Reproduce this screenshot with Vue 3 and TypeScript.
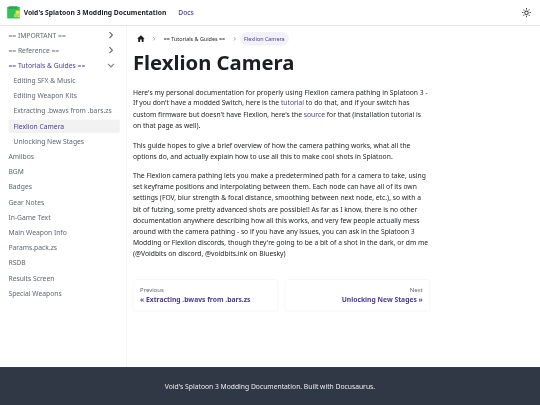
<script setup lang="ts">
interface NavItem {
  label: string
  arrow?: 'right' | 'down'
  active?: boolean
  sub?: boolean
  current?: boolean
}

const items: NavItem[] = [
  { label: '== IMPORTANT ==', arrow: 'right' },
  { label: '== Reference ==', arrow: 'right' },
  { label: '== Tutorials & Guides ==', arrow: 'down', active: true },
  { label: 'Editing SFX & Music', sub: true },
  { label: 'Editing Weapon Kits', sub: true },
  { label: 'Extracting .bwavs from .bars.zs', sub: true },
  { label: 'Flexlion Camera', sub: true, current: true },
  { label: 'Unlocking New Stages', sub: true },
  { label: 'Amiibos' },
  { label: 'BGM' },
  { label: 'Badges' },
  { label: 'Gear Notes' },
  { label: 'In-Game Text' },
  { label: 'Main Weapon Info' },
  { label: 'Params.pack.zs' },
  { label: 'RSDB' },
  { label: 'Results Screen' },
  { label: 'Special Weapons' },
]
</script>

<template>
  <div class="viewport">
    <div class="page">
      <header class="navbar">
        <svg class="logo" viewBox="0 0 32 32">
          <rect x="1" y="2" width="30" height="28" rx="2" fill="#35c05a" />
          <rect x="5" y="1" width="20" height="6" fill="#2aa54a" />
          <rect x="21" y="11" width="10" height="10" fill="#e6e552" />
          <rect x="17" y="19" width="9" height="8" fill="#a9d958" />
          <rect x="26" y="22" width="5" height="5" fill="#d8e37a" />
        </svg>
        <span class="brand">Void's Splatoon 3 Modding Documentation</span>
        <a class="nav-link">Docs</a>
        <button class="theme" aria-label="Theme">
          <svg viewBox="0 0 24 24" width="24" height="24">
            <path fill="currentColor" d="M12,9c1.65,0,3,1.35,3,3s-1.35,3-3,3s-3-1.35-3-3S10.35,9,12,9 M12,7c-2.76,0-5,2.24-5,5s2.24,5,5,5s5-2.24,5-5 S14.76,7,12,7L12,7z M2,13l2,0c0.55,0,1-0.45,1-1s-0.45-1-1-1l-2,0c-0.55,0-1,0.45-1,1S1.45,13,2,13z M20,13l2,0c0.55,0,1-0.45,1-1 s-0.45-1-1-1l-2,0c-0.55,0-1,0.45-1,1S19.45,13,20,13z M11,2v2c0,0.55,0.45,1,1,1s1-0.45,1-1V2c0-0.55-0.45-1-1-1S11,1.45,11,2z M11,20v2c0,0.55,0.45,1,1,1s1-0.45,1-1v-2c0-0.55-0.45-1-1-1C11.45,19,11,19.45,11,20z M5.99,4.58c-0.39-0.39-1.03-0.39-1.41,0 c-0.39,0.39-0.39,1.03,0,1.41l1.06,1.06c0.39,0.39,1.03,0.39,1.41,0s0.39-1.03,0-1.41L5.99,4.58z M18.36,16.95 c-0.39-0.39-1.03-0.39-1.41,0c-0.39,0.39-0.39,1.03,0,1.41l1.06,1.06c0.39,0.39,1.03,0.39,1.41,0c0.39-0.39,0.39-1.03,0-1.41 L18.36,16.95z M19.42,5.99c0.39-0.39,0.39-1.03,0-1.41c-0.39-0.39-1.03-0.39-1.41,0l-1.06,1.06c-0.39,0.39-0.39,1.03,0,1.41 s1.03,0.39,1.41,0L19.42,5.99z M7.05,18.36c0.39-0.39,0.39-1.03,0-1.41c-0.39-0.39-1.03-0.39-1.41,0l-1.06,1.06 c-0.39,0.39-0.39,1.03,0,1.41s1.03,0.39,1.41,0L7.05,18.36z" />
          </svg>
        </button>
      </header>

      <div class="main">
        <aside class="sidebar">
          <ul class="menu">
            <li
              v-for="item in items"
              :key="item.label"
              class="menu-item"
              :class="{ sub: item.sub, active: item.active, current: item.current }"
            >
              <span>{{ item.label }}</span>
              <svg v-if="item.arrow" class="arrow" :class="item.arrow" viewBox="0 0 24 24" width="32" height="32">
                <path fill="currentColor" d="M7.41 15.41L12 10.83l4.59 4.58L18 14l-6-6-6 6z" />
              </svg>
            </li>
          </ul>
        </aside>

        <main class="content">
          <nav class="crumbs">
            <svg class="home" viewBox="0 0 24 24" width="22" height="22">
              <path fill="currentColor" d="M10 19v-5h4v5c0 .55.45 1 1 1h3c.55 0 1-.45 1-1v-7h1.7c.46 0 .68-.57.33-.87L12.67 3.6c-.38-.34-.96-.34-1.34 0l-8.36 7.53c-.34.3-.13.87.33.87H5v7c0 .55.45 1 1 1h3c.55 0 1-.45 1-1z" />
            </svg>
            <svg class="sep" viewBox="0 0 8 12" width="8" height="12">
              <path d="M2 2l4 4-4 4" fill="none" stroke="currentColor" stroke-width="1.4" />
            </svg>
            <span class="crumb">== Tutorials &amp; Guides ==</span>
            <svg class="sep" viewBox="0 0 8 12" width="8" height="12">
              <path d="M2 2l4 4-4 4" fill="none" stroke="currentColor" stroke-width="1.4" />
            </svg>
            <span class="pill">Flexlion Camera</span>
          </nav>

          <h1>Flexlion Camera</h1>

          <p>Here's my personal documentation for properly using Flexlion camera pathing in Splatoon 3 - If you don't have a modded Switch, here is the <a>tutorial</a> to do that, and if your switch has custom firmware but doesn't have Flexlion, here's the <a>source</a> for that (installation tutorial is on that page as well).</p>
          <p>This guide hopes to give a brief overview of how the camera pathing works, what all the options do, and actually explain how to use all this to make cool shots in Splatoon.</p>
          <p>The Flexlion camera pathing lets you make a predetermined path for a camera to take, using set keyframe positions and interpolating between them. Each node can have all of its own settings (FOV, blur strength &amp; focal distance, smoothing between next node, etc.), so with a bit of futzing, some pretty advanced shots are possible!! As far as I know, there is no other documentation anywhere describing how all this works, and very few people actually mess around with the camera pathing - so if you have any issues, you can ask in the Splatoon 3 Modding or Flexlion discords, though they're going to be a bit of a shot in the dark, or dm me (@Voidbits on discord, @voidbits.ink on Bluesky)</p>

          <div class="pager">
            <a class="card">
              <span class="sublabel">Previous</span>
              <span class="label">« Extracting .bwavs from .bars.zs</span>
            </a>
            <a class="card next">
              <span class="sublabel">Next</span>
              <span class="label">Unlocking New Stages »</span>
            </a>
          </div>
        </main>
      </div>

      <footer class="footer">Void's Splatoon 3 Modding Documentation. Built with Docusaurus.</footer>
    </div>
  </div>
</template>

<style scoped>
.viewport {
  width: 540px;
  height: 405px;
  overflow: hidden;
}
.page {
  transform: scale(0.421875);
  transform-origin: 0 0;
  filter: blur(0.4px);
  width: 1280px;
  height: 960px;
  display: flex;
  flex-direction: column;
  background: #fff;
  color: #1c1e21;
  font-family: "Noto Sans", sans-serif;
  font-size: 16px;
  line-height: 1.65;
}
.navbar {
  height: 60px;
  flex: none;
  display: flex;
  align-items: center;
  padding: 0 16px;
  box-shadow: 0 1px 2px rgba(0, 0, 0, 0.1);
  position: relative;
  z-index: 1;
}
.logo {
  width: 32px;
  height: 32px;
  margin-right: 8px;
}
.brand {
  font-weight: 700;
}
.nav-link {
  margin-left: 28px;
  font-weight: 500;
  color: #4b3b8f;
}
.theme {
  margin-left: auto;
  width: 32px;
  height: 32px;
  padding: 0;
  border: 0;
  background: none;
  color: #1c1e21;
  display: flex;
  align-items: center;
  justify-content: center;
}
.main {
  flex: 1;
  display: flex;
  min-height: 0;
}
.sidebar {
  width: 301px;
  flex: none;
  border-right: 1px solid #e4e6e9;
  padding: 3px 16px 0 8px;
  box-sizing: border-box;
}
.menu {
  list-style: none;
  margin: 0;
  padding: 0;
}
.menu-item {
  height: 32px;
  margin-top: 4px;
  padding: 0 12px;
  display: flex;
  align-items: center;
  justify-content: space-between;
  border-radius: 4px;
  line-height: 1.25;
  color: #606770;
}
.menu-item.active {
  color: #4b3b8f;
}
.menu-item.sub {
  margin-left: 12px;
}
.menu-item.current {
  background: rgba(0, 0, 0, 0.05);
  color: #4b3b8f;
}
.arrow {
  color: #606770;
  flex: none;
  margin-right: -7px;
}
.arrow.right {
  transform: rotate(90deg);
}
.arrow.down {
  transform: rotate(180deg);
  color: #80868f;
}
.content {
  width: 704px;
  margin-left: 14px;
  padding-top: 16px;
}
.crumbs {
  display: flex;
  align-items: center;
  height: 32px;
  margin-bottom: 11px;
  font-size: 12.8px;
  line-height: 1.25;
  padding-left: 8px;
}
.sep {
  margin: 0 9px 0 12px;
  color: #606770;
  flex: none;
}
.home + .sep {
  margin-left: 16px;
}
.crumb {
  padding: 6.4px 6px 6.4px 10px;
  color: #1c1e21;
}
.pill {
  padding: 8px 10px;
  background: rgba(75, 59, 143, 0.07);
  color: #4b3b8f;
  border-radius: 32px;
}
h1 {
  margin: 0 0 26px;
  font-size: 48px;
  line-height: 1.25;
  font-weight: 700;
}
p {
  margin: 0 0 20px;
}
a {
  color: #4b3b8f;
}
.pager {
  display: grid;
  grid-template-columns: 1fr 1fr;
  gap: 16px;
  margin-top: 48px;
}
.card {
  display: block;
  border: 1px solid #ebedf0;
  border-radius: 6.4px;
  padding: 16px;
  line-height: 1.25;
}
.card.next {
  text-align: right;
}
.sublabel {
  display: block;
  font-size: 14px;
  color: #606770;
  margin-bottom: 4px;
}
.label {
  display: block;
  font-weight: 700;
  word-break: break-word;
}
.footer {
  height: 90px;
  flex: none;
  background: #303846;
  color: #ebedf0;
  display: flex;
  align-items: center;
  justify-content: center;
}
</style>
